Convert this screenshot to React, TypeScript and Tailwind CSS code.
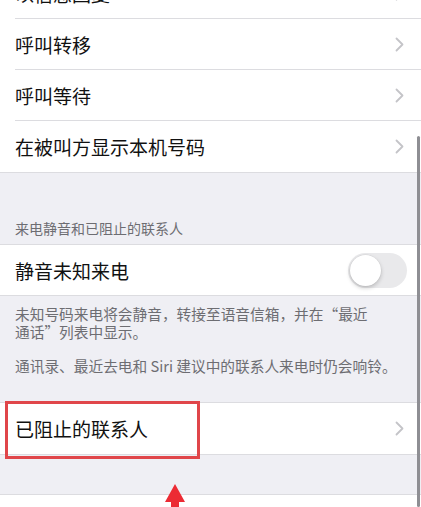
import React from "react";

const FONT = { fontFamily: '"Noto Sans CJK SC", "Noto Sans", sans-serif' };

function Chevron() {
  return (
    <svg width="9" height="15" viewBox="0 0 9 15" className="shrink-0">
      <path d="M1.5 1.5 L7.5 7.5 L1.5 13.5" fill="none" stroke="#c4c4c8" strokeWidth="1.8" strokeLinecap="round" strokeLinejoin="round" />
    </svg>
  );
}

function NavRow({ label, last = false }: { label: string; last?: boolean }) {
  return (
    <div className="flex h-[51px] items-stretch bg-white pl-[15px]">
      <div
        className={`flex flex-1 items-center justify-between pr-[17px] ${last ? "" : "border-b border-[#dcdce0]"}`}
      >
        <span className="text-[19px] leading-none text-[#111]">{label}</span>
        <Chevron />
      </div>
    </div>
  );
}

function Toggle() {
  return (
    <div className="relative h-[35px] w-[59px] rounded-full bg-[#e9e9eb]">
      <div className="absolute left-[2px] top-[2px] h-[31px] w-[31px] rounded-full bg-white shadow-[0_2px_4px_rgba(0,0,0,0.2),0_0_0_0.5px_rgba(0,0,0,0.06)]" />
    </div>
  );
}

export default function App() {
  return (
    <div className="relative h-[507px] w-[421px] overflow-hidden bg-[#efeff4]" style={FONT}>
      <div className="-mt-[32px] border-b border-[#dcdce0] bg-white">
        <NavRow label="以信息回复" />
        <NavRow label="呼叫转移" />
        <NavRow label="呼叫等待" />
        <NavRow label="在被叫方显示本机号码" last />
      </div>

      <div className="flex h-[71px] items-end px-[15px] pb-[9px]">
        <span className="text-[14px] leading-none text-[#6d6d72]">来电静音和已阻止的联系人</span>
      </div>

      <div className="flex h-[52px] items-center justify-between border-y border-[#dcdce0] bg-white pl-[15px] pr-[14px]">
        <span className="text-[19px] leading-none text-[#111]">静音未知来电</span>
        <Toggle />
      </div>

      <div className="px-[15px] pt-[9px] text-[14.7px] leading-[18px] text-[#6d6d72]">
        <p>
          未知号码来电将会静音，转接至语音信箱，并在“最近
          <br />
          通话”列表中显示。
        </p>
        <p className="mt-[16px] whitespace-nowrap">通讯录、最近去电和 Siri 建议中的联系人来电时仍会响铃。</p>
      </div>

      <div className="mt-[27px] border-y border-[#dcdce0]">
        <NavRow label="已阻止的联系人" last />
      </div>

      <div className="h-[39px]" />
      <div className="h-[20px] border-t border-[#dcdce0] bg-white" />

      {/* annotation: red highlight box */}
      <div className="absolute left-[5px] top-[401px] h-[58px] w-[195px] border-[3px] border-[#e0464a]" />

      {/* annotation: red arrow */}
      <svg className="absolute left-[163px] top-[484px]" width="24" height="23" viewBox="0 0 24 23">
        <path d="M12 0 L22 18 L16 18 L16 23 L8 23 L8 18 L2 18 Z" fill="#ec2b34" />
      </svg>

      {/* scroll indicator */}
      <div className="absolute left-[417px] top-[136px] h-[371px] w-[3px] rounded-full bg-[#8e8e93]" />
    </div>
  );
}
